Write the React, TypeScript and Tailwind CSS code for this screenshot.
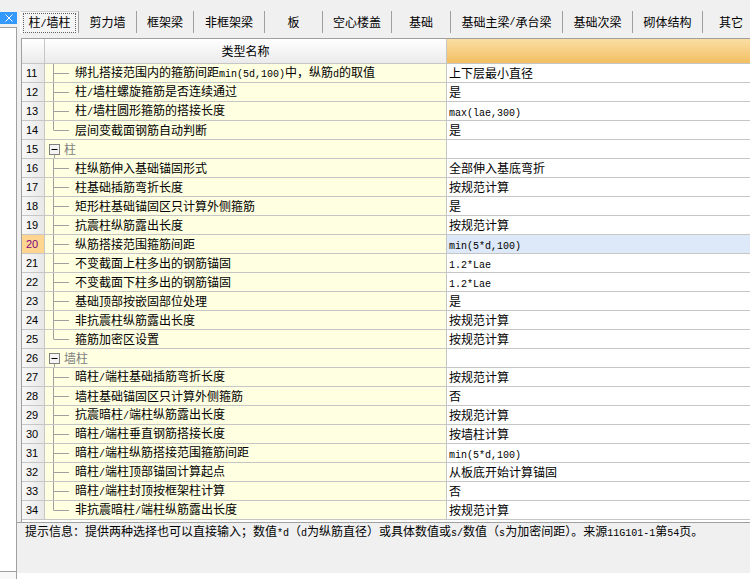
import type { ReactNode } from "react"

type Row = {
  n: number
  name: string
  value?: string
  group?: boolean
  last?: boolean
  active?: boolean
}

const tabs: { label: string; w: string }[] = [
  { label: "柱/墙柱", w: "w-[59px]" },
  { label: "剪力墙", w: "w-[58px]" },
  { label: "框架梁", w: "w-[57px]" },
  { label: "非框架梁", w: "w-[71px]" },
  { label: "板", w: "w-[58px]" },
  { label: "空心楼盖", w: "w-[69px]" },
  { label: "基础", w: "w-[59px]" },
  { label: "基础主梁/承台梁", w: "w-[112px]" },
  { label: "基础次梁", w: "w-[70px]" },
  { label: "砌体结构", w: "w-[70px]" },
  { label: "其它", w: "w-[57px]" },
]

const rows: Row[] = [
  { n: 11, name: "绑扎搭接范围内的箍筋间距min(5d,100)中，纵筋d的取值", value: "上下层最小直径" },
  { n: 12, name: "柱/墙柱螺旋箍筋是否连续通过", value: "是" },
  { n: 13, name: "柱/墙柱圆形箍筋的搭接长度", value: "max(lae,300)" },
  { n: 14, name: "层间变截面钢筋自动判断", value: "是", last: true },
  { n: 15, name: "柱", group: true },
  { n: 16, name: "柱纵筋伸入基础锚固形式", value: "全部伸入基底弯折" },
  { n: 17, name: "柱基础插筋弯折长度", value: "按规范计算" },
  { n: 18, name: "矩形柱基础锚固区只计算外侧箍筋", value: "是" },
  { n: 19, name: "抗震柱纵筋露出长度", value: "按规范计算" },
  { n: 20, name: "纵筋搭接范围箍筋间距", value: "min(5*d,100)", active: true },
  { n: 21, name: "不变截面上柱多出的钢筋锚固", value: "1.2*Lae" },
  { n: 22, name: "不变截面下柱多出的钢筋锚固", value: "1.2*Lae" },
  { n: 23, name: "基础顶部按嵌固部位处理", value: "是" },
  { n: 24, name: "非抗震柱纵筋露出长度", value: "按规范计算" },
  { n: 25, name: "箍筋加密区设置", value: "按规范计算", last: true },
  { n: 26, name: "墙柱", group: true },
  { n: 27, name: "暗柱/端柱基础插筋弯折长度", value: "按规范计算" },
  { n: 28, name: "墙柱基础锚固区只计算外侧箍筋", value: "否" },
  { n: 29, name: "抗震暗柱/端柱纵筋露出长度", value: "按规范计算" },
  { n: 30, name: "暗柱/端柱垂直钢筋搭接长度", value: "按墙柱计算" },
  { n: 31, name: "暗柱/端柱纵筋搭接范围箍筋间距", value: "min(5*d,100)" },
  { n: 32, name: "暗柱/端柱顶部锚固计算起点", value: "从板底开始计算锚固" },
  { n: 33, name: "暗柱/端柱封顶按框架柱计算", value: "否" },
  { n: 34, name: "非抗震暗柱/端柱纵筋露出长度", value: "按规范计算", last: true },
]

const TIP =
  "提示信息：提供两种选择也可以直接输入；数值*d（d为纵筋直径）或具体数值或s/数值（s为加密间距）。来源11G101-1第54页。"

// Half-width (ASCII) runs use a 6px-per-char mono face, like the SimSun bitmap font.
function Mixed({ s }: { s: string }) {
  const parts = s.split(/([\x20-\x7e]+)/).filter(Boolean)
  return (
    <>
      {parts.map((p, i): ReactNode =>
        /^[\x20-\x7e]+$/.test(p) ? (
          <span key={i} className="font-['Liberation_Mono',monospace] text-[10px]">
            {p}
          </span>
        ) : (
          <span key={i}>{p}</span>
        ),
      )}
    </>
  )
}

function TreeLine({ last }: { last?: boolean }) {
  return (
    <svg width="26" height="18" className="shrink-0" aria-hidden>
      <line x1="8.5" y1="0" x2="8.5" y2={last ? 9 : 18} stroke="#a0a0a0" />
      <line x1="8.5" y1="9.5" x2="24" y2="9.5" stroke="#a0a0a0" />
    </svg>
  )
}

function GroupBox() {
  return (
    <svg width="16" height="18" className="shrink-0" aria-hidden>
      <line x1="8.5" y1="14" x2="8.5" y2="18" stroke="#a0a0a0" />
      <rect x="3.5" y="4.5" width="10" height="10" fill="#f4f4f4" stroke="#808080" />
      <line x1="5.5" y1="9.5" x2="11.5" y2="9.5" stroke="#000" />
    </svg>
  )
}

function GridRow({ row }: { row: Row }) {
  return (
    <div className="flex h-[19px] border-b border-[#c6c6c6] leading-[18px]">
      <div
        className={`w-[23px] shrink-0 border-r border-[#c6c6c6] pl-[4px] font-['Liberation_Sans',sans-serif] text-[11px] ${
          row.active
            ? "bg-[#ffd590] text-[#800080]"
            : "bg-gradient-to-r from-[#f8f8f8] to-[#e8e8e8]"
        }`}
      >
        {row.n}
      </div>
      <div className="flex w-[402px] shrink-0 items-center border-r border-[#c6c6c6] bg-[#ffffe1]">
        {row.group ? (
          <>
            <span className="ml-[1px] flex">
              <GroupBox />
            </span>
            <span className="ml-[2px] text-[#808080]">{row.name}</span>
          </>
        ) : (
          <>
            <TreeLine last={row.last} />
            <span className="ml-[4px] whitespace-nowrap">
              <Mixed s={row.name} />
            </span>
          </>
        )}
      </div>
      <div
        className={`flex-1 whitespace-nowrap pl-[2px] ${
          row.active ? "bg-[#dde9f8]" : "bg-white"
        }`}
      >
        {row.value && <Mixed s={row.value} />}
      </div>
    </div>
  )
}

export default function App() {
  return (
    <div className="flex h-[579px] w-[750px] overflow-hidden bg-[#f0f0f0] font-['Noto_Sans_CJK_SC',sans-serif] text-[12px] text-black">
      {/* Docked side panel, mostly hidden */}
      <div className="flex w-[17px] shrink-0 flex-col">
        <div className="h-[12px]" />
        <div className="flex h-[12px] items-center justify-center bg-[#3399ff]">
          <svg width="8" height="8" aria-hidden>
            <path d="M0.5 0.5 L7.5 7.5 M7.5 0.5 L0.5 7.5" stroke="#fff" />
          </svg>
        </div>
        <div className="mt-[3px] h-[545px] border-y border-r border-[#a0a0a0] bg-white" />
        <div className="flex-1 border-r border-[#a0a0a0] bg-[#f8f8f8]" />
      </div>

      <div className="flex min-w-0 flex-1 flex-col">
        {/* Tab strip */}
        <div className="flex h-[33px] shrink-0 items-end whitespace-nowrap pl-[3px]">
          {tabs.map((t, i) => (
            <div
              key={t.label}
              className={`flex h-[22px] shrink-0 items-center justify-center border-r border-[#a0a0a0] ${t.w} ${
                i === 0 ? "border-l border-t border-l-white border-t-[#d4d4d4] bg-[#f5f5f5]" : ""
              }`}
            >
              {i === 0 ? (
                <span className="border border-dotted border-[#606060] px-[4px] leading-[15px]">
                  <Mixed s={t.label} />
                </span>
              ) : (
                <Mixed s={t.label} />
              )}
            </div>
          ))}
        </div>

        {/* Property grid */}
        <div className="ml-[4px] mt-[5px] shrink-0 border-l border-t border-[#a0a0a0]">
          <div className="flex h-[25px] border-b border-[#c6c6c6]">
            <div className="w-[23px] shrink-0 border-r border-[#c6c6c6] bg-gradient-to-b from-white to-[#ebebeb]" />
            <div className="flex w-[402px] shrink-0 items-center justify-center border-r border-[#c6c6c6] bg-gradient-to-b from-white to-[#ebebeb]">
              类型名称
            </div>
            <div className="flex-1 bg-gradient-to-b from-[#fbdea4] to-[#f2bf61]" />
          </div>
          {rows.map((r) => (
            <GridRow key={r.n} row={r} />
          ))}
          <div className="h-[2px] bg-white" />
        </div>

        {/* Hint bar */}
        <div className="h-[51px] shrink-0 border-t border-[#a0a0a0] pl-[8px] leading-[16px] whitespace-nowrap">
          <Mixed s={TIP} />
        </div>
        <div className="flex-1 bg-white" />
      </div>
    </div>
  )
}
